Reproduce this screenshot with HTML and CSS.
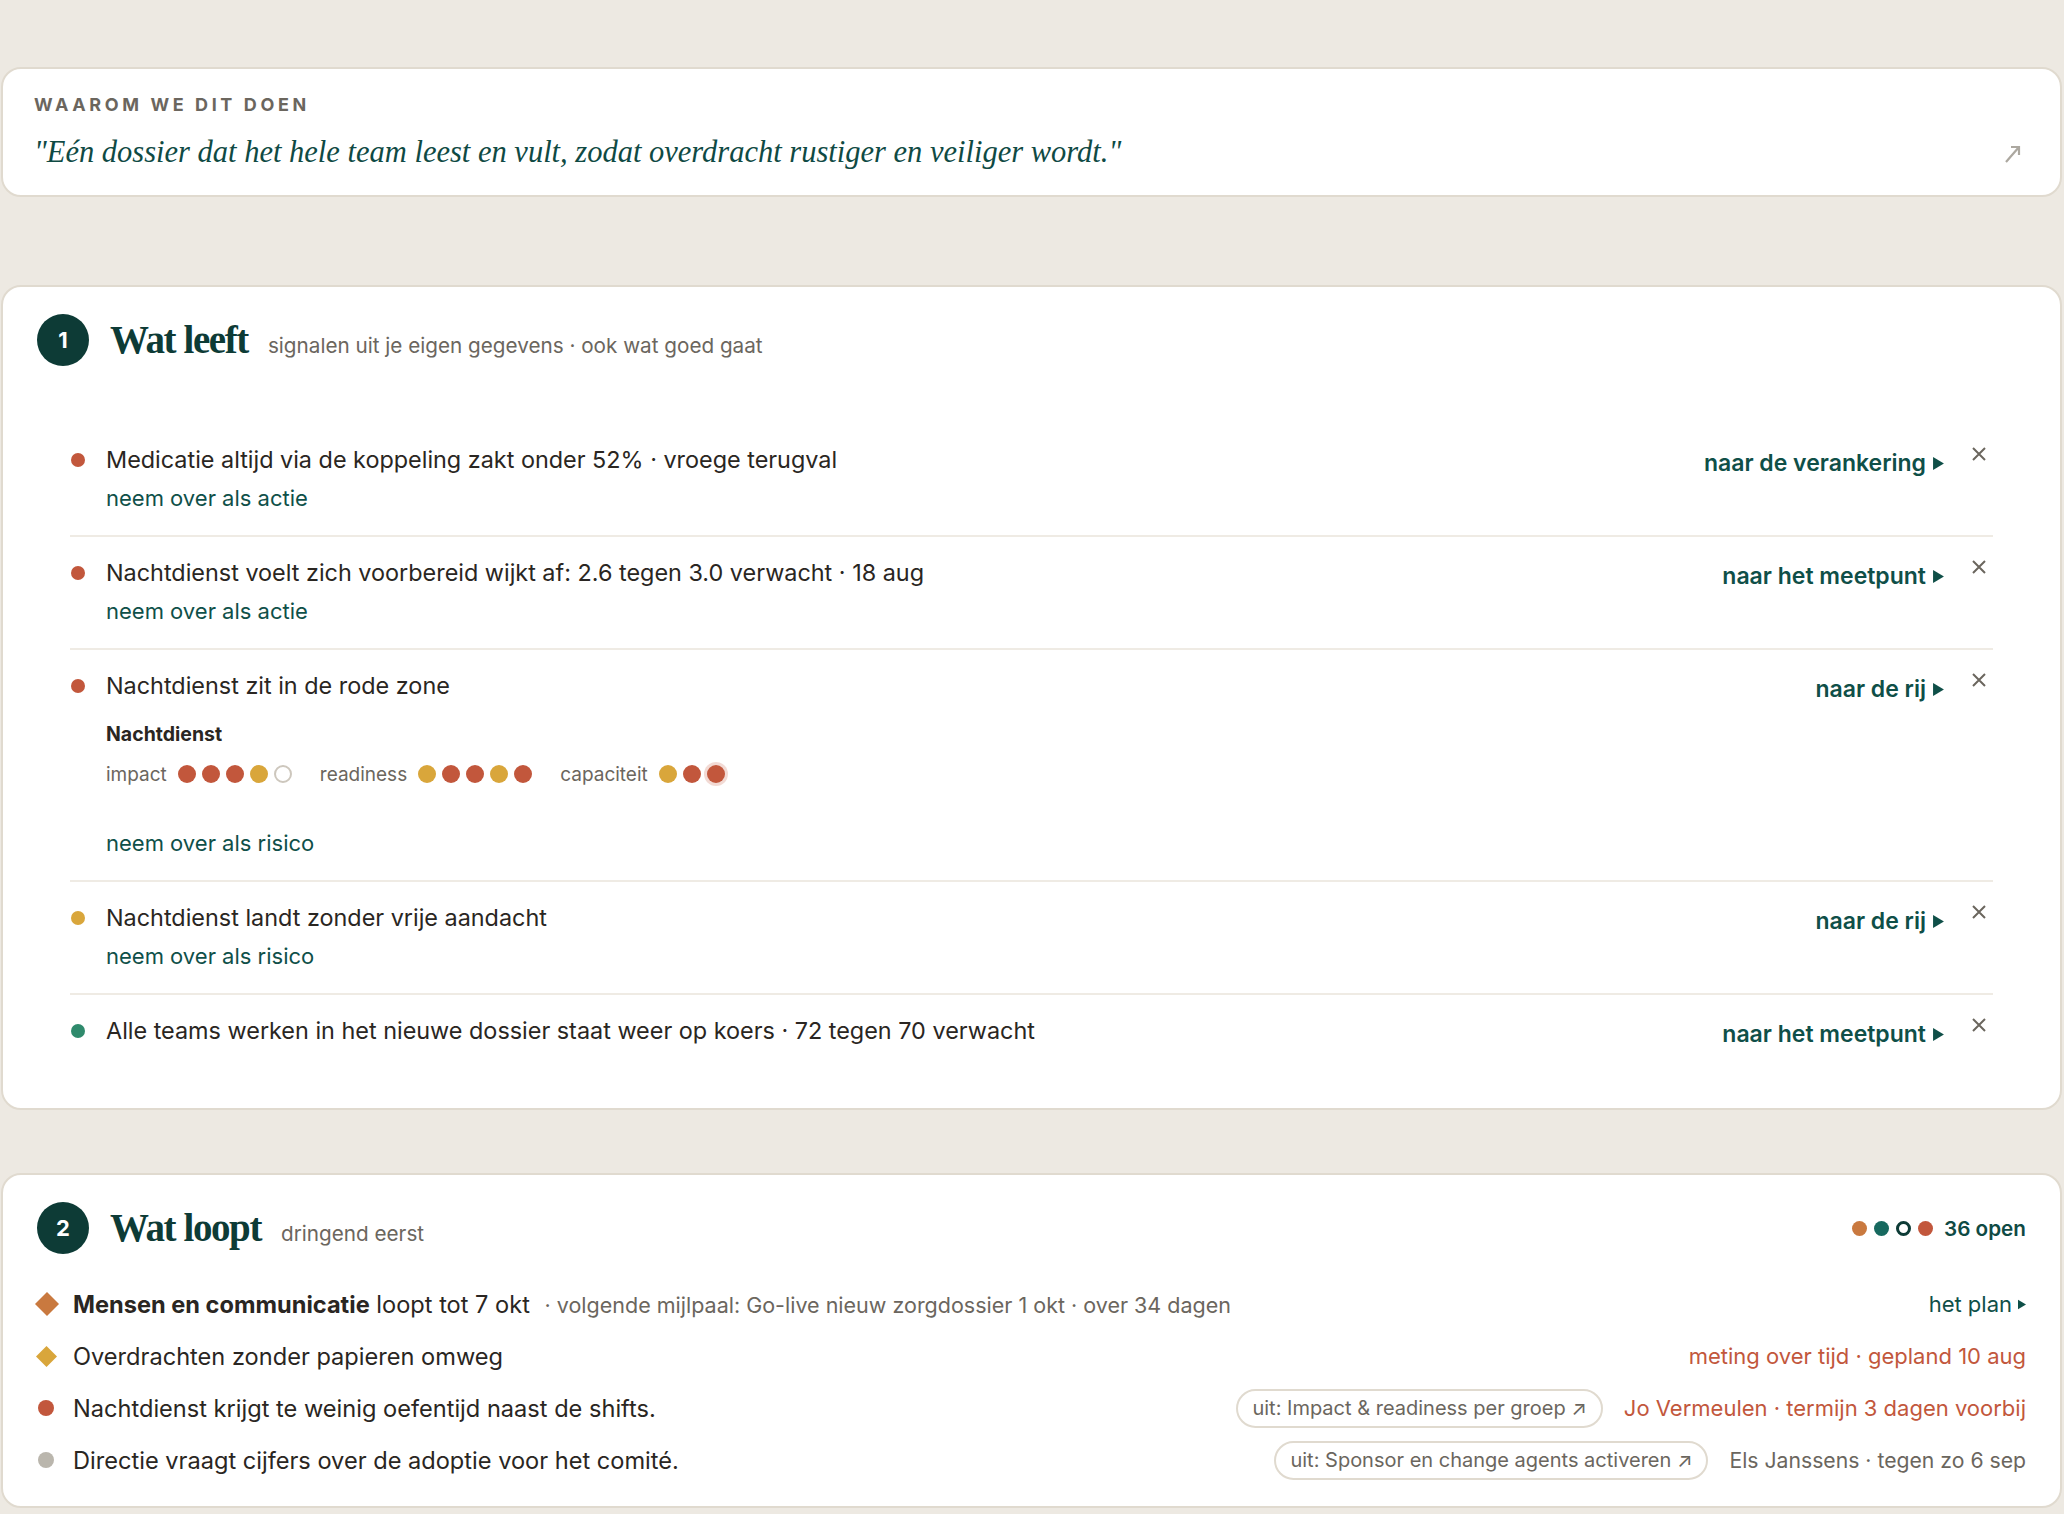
FILE: index.html
```html
<!DOCTYPE html>
<html lang="nl">
<head>
<meta charset="utf-8">
<title>Dossier</title>
<link rel="stylesheet" href="styles.css">
</head>
<body>
<div class="page">

  <section class="card why">
    <div class="why-label">WAAROM WE DIT DOEN</div>
    <div class="why-row">
      <p class="why-quote">"Eén dossier dat het hele team leest en vult, zodat overdracht rustiger en veiliger wordt."</p>
      <svg class="why-arrow" viewBox="0 0 18 20"><path d="M2 18 L15 3 M7 3 L15 3 L15 11"/></svg>
    </div>
  </section>

  <section class="card lives">
    <header class="sec-head">
      <span class="badge">1</span>
      <div class="sec-titles">
        <h2 class="sec-title">Wat leeft</h2>
        <span class="sec-sub">signalen uit je eigen gegevens · ook wat goed gaat</span>
      </div>
    </header>

    <ul class="signals">
      <li class="signal">
        <span class="dot dot-red"></span>
        <div class="signal-main">
          <div class="signal-title">Medicatie altijd via de koppeling zakt onder 52% · vroege terugval</div>
          <a class="take">neem over als actie</a>
        </div>
        <a class="goto">naar de verankering <svg class="tri" viewBox="0 0 10 12"><path d="M0 0 L10 6 L0 12 Z"/></svg></a>
        <svg class="close" viewBox="0 0 14 14"><path d="M1 1 L13 13 M13 1 L1 13"/></svg>
      </li>
      <li class="signal">
        <span class="dot dot-red"></span>
        <div class="signal-main">
          <div class="signal-title">Nachtdienst voelt zich voorbereid wijkt af: 2.6 tegen 3.0 verwacht · 18 aug</div>
          <a class="take">neem over als actie</a>
        </div>
        <a class="goto">naar het meetpunt <svg class="tri" viewBox="0 0 10 12"><path d="M0 0 L10 6 L0 12 Z"/></svg></a>
        <svg class="close" viewBox="0 0 14 14"><path d="M1 1 L13 13 M13 1 L1 13"/></svg>
      </li>
      <li class="signal">
        <span class="dot dot-red"></span>
        <div class="signal-main">
          <div class="signal-title">Nachtdienst zit in de rode zone</div>
          <div class="group-name">Nachtdienst</div>
          <div class="scores">
            <div class="score">
              <span class="score-label">impact</span>
              <span class="pips">
                <span class="pip pip-red"></span><span class="pip pip-red"></span><span class="pip pip-red"></span><span class="pip pip-yellow"></span><span class="pip pip-empty"></span>
              </span>
            </div>
            <div class="score">
              <span class="score-label">readiness</span>
              <span class="pips">
                <span class="pip pip-yellow"></span><span class="pip pip-red"></span><span class="pip pip-red"></span><span class="pip pip-yellow"></span><span class="pip pip-red"></span>
              </span>
            </div>
            <div class="score">
              <span class="score-label">capaciteit</span>
              <span class="pips">
                <span class="pip pip-yellow"></span><span class="pip pip-red"></span><span class="pip pip-red pip-halo"></span>
              </span>
            </div>
          </div>
          <a class="take take-far">neem over als risico</a>
        </div>
        <a class="goto">naar de rij <svg class="tri" viewBox="0 0 10 12"><path d="M0 0 L10 6 L0 12 Z"/></svg></a>
        <svg class="close" viewBox="0 0 14 14"><path d="M1 1 L13 13 M13 1 L1 13"/></svg>
      </li>
      <li class="signal">
        <span class="dot dot-yellow"></span>
        <div class="signal-main">
          <div class="signal-title">Nachtdienst landt zonder vrije aandacht</div>
          <a class="take">neem over als risico</a>
        </div>
        <a class="goto">naar de rij <svg class="tri" viewBox="0 0 10 12"><path d="M0 0 L10 6 L0 12 Z"/></svg></a>
        <svg class="close" viewBox="0 0 14 14"><path d="M1 1 L13 13 M13 1 L1 13"/></svg>
      </li>
      <li class="signal">
        <span class="dot dot-green"></span>
        <div class="signal-main">
          <div class="signal-title">Alle teams werken in het nieuwe dossier staat weer op koers · 72 tegen 70 verwacht</div>
        </div>
        <a class="goto">naar het meetpunt <svg class="tri" viewBox="0 0 10 12"><path d="M0 0 L10 6 L0 12 Z"/></svg></a>
        <svg class="close" viewBox="0 0 14 14"><path d="M1 1 L13 13 M13 1 L1 13"/></svg>
      </li>
    </ul>
  </section>

  <section class="card runs">
    <header class="sec-head">
      <span class="badge">2</span>
      <div class="sec-titles">
        <h2 class="sec-title">Wat loopt</h2>
        <span class="sec-sub">dringend eerst</span>
      </div>
      <div class="open-count">
        <span class="mini mini-orange"></span><span class="mini mini-teal"></span><span class="mini mini-ring"></span><span class="mini mini-red"></span>
        <span class="open-text">36 open</span>
      </div>
    </header>

    <ul class="items">
      <li class="item">
        <span class="item-icon"><svg class="diamond diamond-lg" viewBox="0 0 24 24"><path d="M12 0 L24 12 L12 24 L0 12 Z" fill="#c9793f"/></svg></span>
        <div class="item-main"><strong>Mensen en communicatie</strong> loopt tot 7 okt <span class="item-meta">· volgende mijlpaal: Go-live nieuw zorgdossier 1 okt · over 34 dagen</span></div>
        <div class="item-side"><a class="plan">het plan <svg class="tri tri-sm" viewBox="0 0 10 12"><path d="M0 0 L10 6 L0 12 Z"/></svg></a></div>
      </li>
      <li class="item">
        <span class="item-icon"><svg class="diamond diamond-md" viewBox="0 0 24 24"><path d="M12 0 L24 12 L12 24 L0 12 Z" fill="#d9a63b"/></svg></span>
        <div class="item-main">Overdrachten zonder papieren omweg</div>
        <div class="item-side"><span class="side-red">meting over tijd · gepland 10 aug</span></div>
      </li>
      <li class="item">
        <span class="item-icon"><span class="idot idot-red"></span></span>
        <div class="item-main">Nachtdienst krijgt te weinig oefentijd naast de shifts.</div>
        <div class="item-side"><span class="pill">uit: Impact &amp; readiness per groep ↗</span><span class="side-red">Jo Vermeulen · termijn 3 dagen voorbij</span></div>
      </li>
      <li class="item">
        <span class="item-icon"><span class="idot idot-grey"></span></span>
        <div class="item-main">Directie vraagt cijfers over de adoptie voor het comité.</div>
        <div class="item-side"><span class="pill">uit: Sponsor en change agents activeren ↗</span><span class="side-grey">Els Janssens · tegen zo 6 sep</span></div>
      </li>
    </ul>
  </section>

</div>
</body>
</html>
```

FILE: styles.css
```css
* { box-sizing: border-box; }

html, body {
  margin: 0;
  padding: 0;
  background: #ede9e2;
}

body {
  font-family: Inter, "Noto Sans", sans-serif;
  color: #2a2622;
}

.page {
  padding: 67px 2px 0 1px;
  display: flex;
  flex-direction: column;
}

.card {
  background: #ffffff;
  border: 2px solid #e0dacf;
  border-radius: 20px;
}

/* ---- why card ---- */
.why {
  padding: 24px 40px 24px 31px;
}

.why-label {
  font-size: 18px;
  line-height: 24px;
  font-weight: 700;
  letter-spacing: 3.6px;
  color: #6b665e;
}

.why-row {
  margin-top: 16px;
  display: flex;
  align-items: center;
  justify-content: space-between;
}

.why-quote {
  margin: 0;
  font-family: "Liberation Serif", serif;
  font-style: italic;
  font-size: 30.5px;
  line-height: 38px;
  color: #0f4a44;
}

.why-arrow {
  flex: none;
  width: 18px;
  height: 20px;
  margin-top: 4px;
  margin-right: -2px;
  fill: none;
  stroke: #aca8a0;
  stroke-width: 2.2;
}

/* ---- sections ---- */
.lives {
  margin-top: 88px;
  padding: 27px 34px 36px 34px;
}

.runs {
  margin-top: 63px;
  padding: 27px 34px 26px 34px;
}

.sec-head {
  display: flex;
  align-items: center;
}

.badge {
  width: 52px;
  height: 52px;
  border-radius: 50%;
  background: #0d3b36;
  color: #ffffff;
  font-size: 22px;
  font-weight: 700;
  display: flex;
  align-items: center;
  justify-content: center;
  flex: none;
}

.sec-titles {
  margin-left: 21px;
  display: flex;
  align-items: baseline;
  gap: 20px;
}

.sec-title {
  margin: 0;
  font-family: "Liberation Serif", serif;
  font-weight: 700;
  font-size: 39px;
  line-height: 48px;
  letter-spacing: -1.4px;
  color: #0d3b36;
}

.sec-sub {
  font-size: 20.7px;
  color: #6b665e;
}

/* ---- signals ---- */
.signals {
  list-style: none;
  margin: 58px 33px 0 33px;
  padding: 0;
}

.signal {
  display: flex;
  align-items: flex-start;
  padding: 20px 0 22px 0;
  border-bottom: 2px solid #efebe4;
}

.signal:last-child {
  border-bottom: none;
}

.dot {
  flex: none;
  width: 14px;
  height: 14px;
  border-radius: 50%;
  margin: 9px 21px 0 1px;
}

.dot-red { background: #c2573c; }
.dot-yellow { background: #d9a63b; }
.dot-green { background: #2f8a6c; }

.signal-main {
  flex: 1;
  min-width: 0;
}

.signal-title {
  font-size: 23.4px;
  line-height: 32px;
  color: #2a2622;
}

.take {
  display: block;
  margin-top: 7px;
  font-size: 22px;
  line-height: 30px;
  color: #0f5049;
}

.take-far {
  margin-top: 41px;
}

.group-name {
  margin-top: 19px;
  font-size: 19.5px;
  line-height: 26px;
  font-weight: 700;
  color: #2a2622;
}

.scores {
  margin-top: 14px;
  display: flex;
  align-items: center;
  gap: 28px;
  height: 26px;
}

.score {
  display: flex;
  align-items: center;
  gap: 11px;
}

.score-label {
  font-size: 19px;
  color: #6b665e;
}

.pips {
  display: flex;
  gap: 6px;
}

.pip {
  width: 18px;
  height: 18px;
  border-radius: 50%;
}

.pip-red { background: #c2573c; }
.pip-yellow { background: #d9a63b; }
.pip-empty { background: #ffffff; border: 2px solid #cdc7bd; }
.pip-halo { box-shadow: 0 0 0 3px rgba(194, 87, 60, 0.22); }

.goto {
  flex: none;
  display: flex;
  align-items: center;
  gap: 7px;
  margin-top: 3px;
  font-size: 23px;
  line-height: 32px;
  font-weight: 600;
  color: #0f4f48;
}

.tri {
  width: 11px;
  height: 13px;
  fill: #0f4f48;
}

.close {
  flex: none;
  width: 14px;
  height: 14px;
  margin: 3px 7px 0 28px;
  stroke: #6b665e;
  stroke-width: 2;
  fill: none;
}

/* ---- runs card ---- */
.open-count {
  margin-left: auto;
  display: flex;
  align-items: center;
  gap: 7px;
}

.mini {
  width: 15px;
  height: 15px;
  border-radius: 50%;
}

.mini-orange { background: #c9793f; }
.mini-teal { background: #17695f; }
.mini-ring { background: #ffffff; border: 3.5px solid #0d3b36; }
.mini-red { background: #c2573c; }

.open-text {
  margin-left: 4px;
  font-size: 20.7px;
  font-weight: 600;
  color: #0f4a44;
}

.items {
  list-style: none;
  margin: 30px 0 0 0;
  padding: 0;
  display: flex;
  flex-direction: column;
  gap: 12px;
}

.item {
  display: flex;
  align-items: center;
  height: 40px;
}

.item-icon {
  flex: none;
  width: 36px;
  display: flex;
  align-items: center;
}

.diamond-lg {
  width: 24px;
  height: 24px;
  margin-left: -2px;
}

.diamond-md {
  width: 21px;
  height: 21px;
  margin-left: -1px;
}

.idot {
  width: 16px;
  height: 16px;
  border-radius: 50%;
  margin-left: 1px;
}

.idot-red { background: #c2573c; }
.idot-grey { background: #bab6ad; }

.item-main {
  flex: 1;
  min-width: 0;
  font-size: 23.6px;
  color: #2a2622;
  white-space: nowrap;
}

.item-main strong {
  font-weight: 700;
}

.item-meta {
  margin-left: 8px;
  font-size: 21.5px;
  color: #6b665e;
}

.item-side {
  flex: none;
  display: flex;
  align-items: center;
  gap: 21px;
  font-size: 22px;
}

.plan {
  display: flex;
  align-items: center;
  gap: 6px;
  color: #0f4f48;
}

.tri-sm {
  width: 8px;
  height: 11px;
}

.side-red { color: #c2573c; }
.side-grey { color: #6b665e; font-size: 21.2px; }

.pill {
  display: flex;
  align-items: center;
  height: 39px;
  padding: 0 14px;
  border: 2px solid #e0dacf;
  border-radius: 20px;
  font-size: 20px;
  color: #6b665e;
}
```
